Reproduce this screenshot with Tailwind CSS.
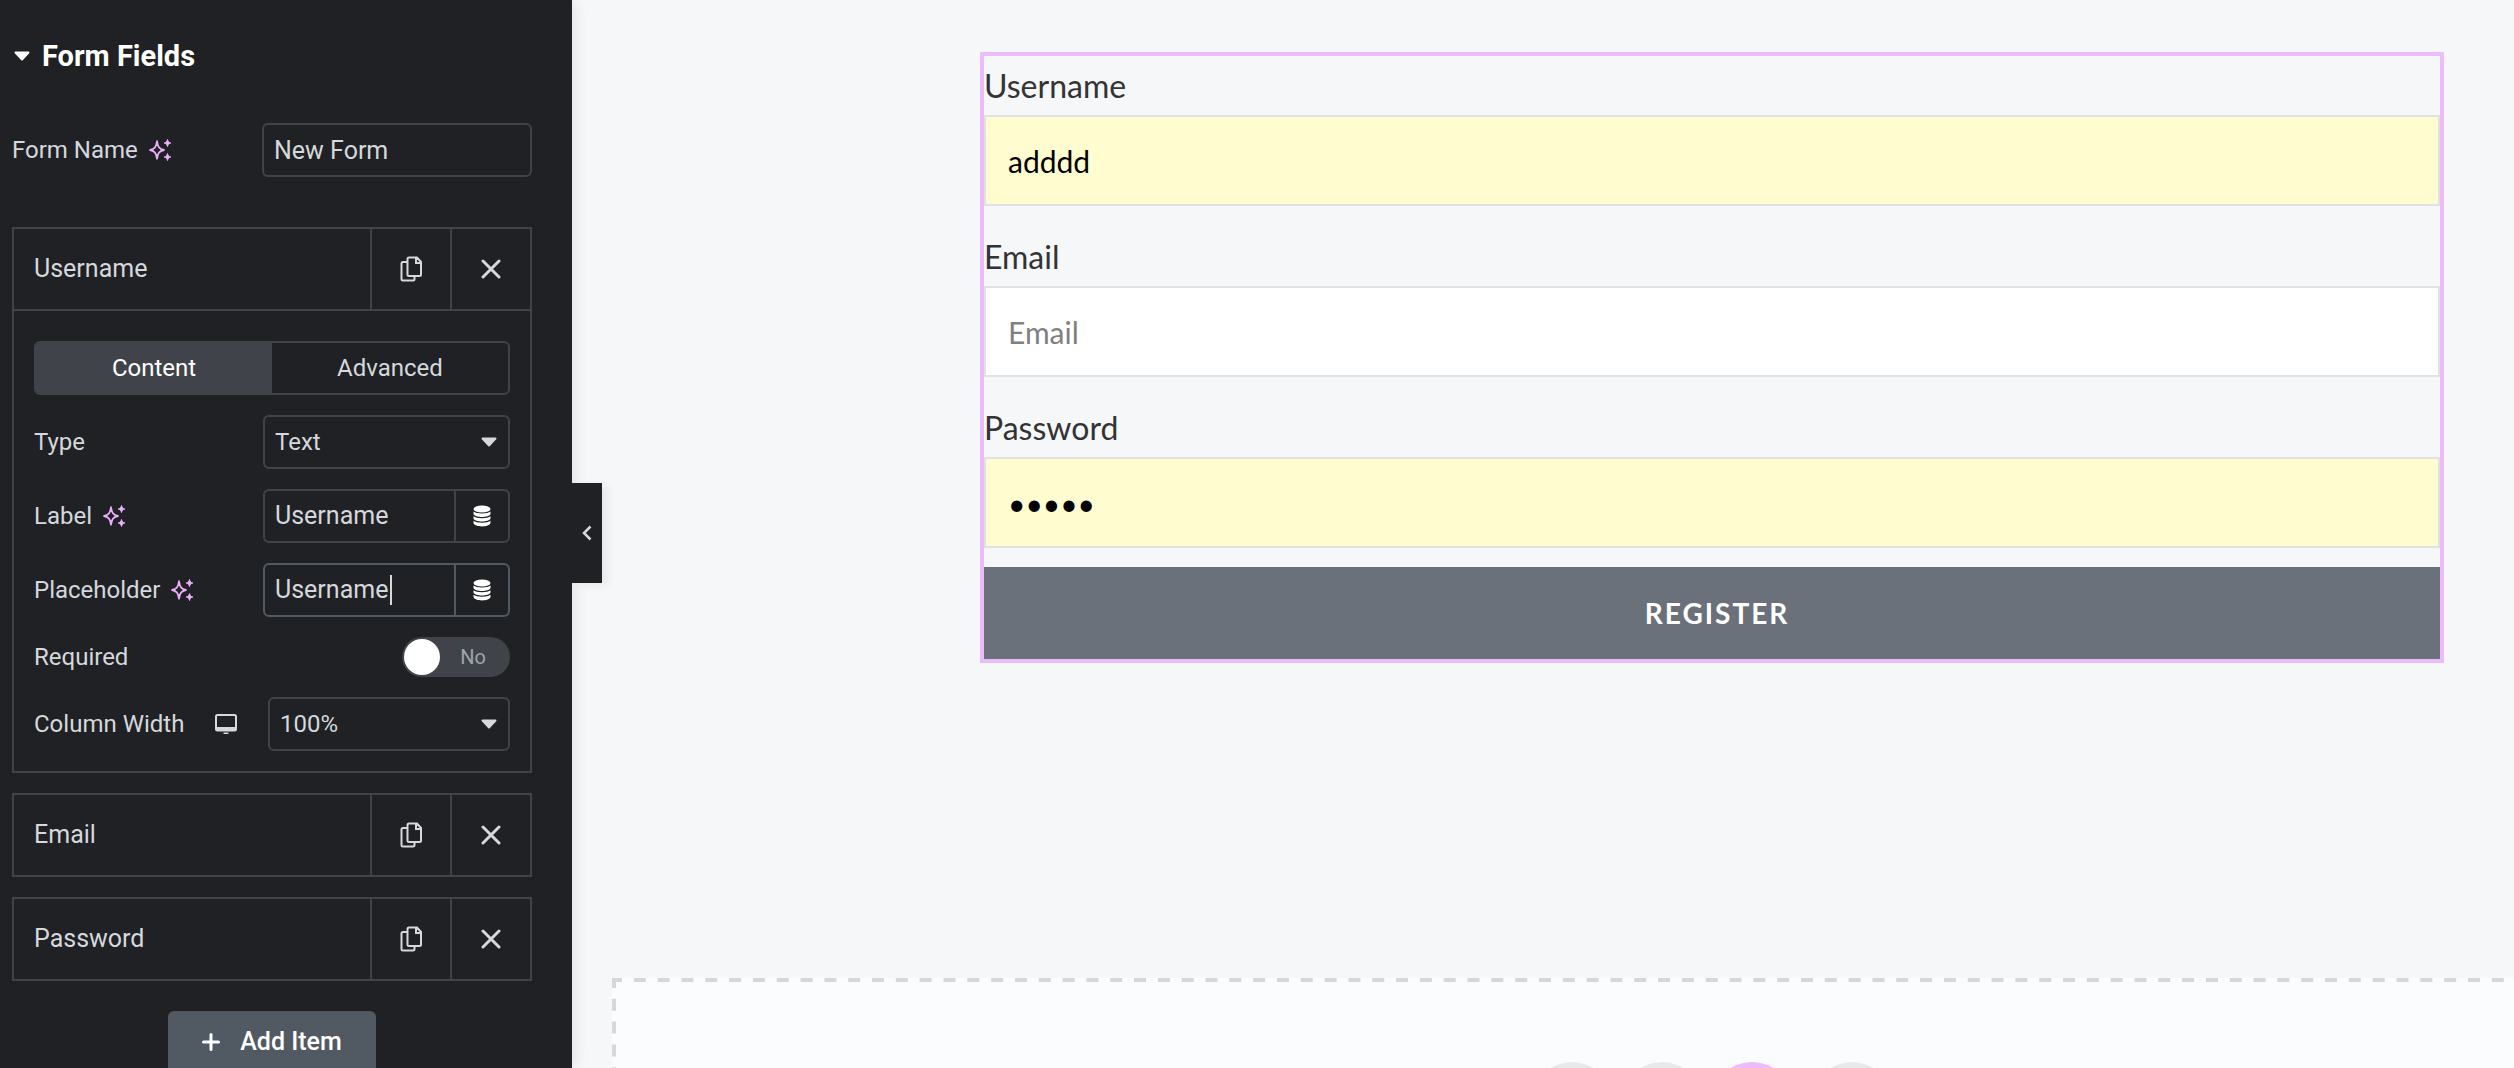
<!DOCTYPE html>
<html lang="en">
<head>
<meta charset="utf-8">
<meta name="viewport" content="width=device-width, initial-scale=1">
<title>Form Fields</title>
<script src="https://cdn.jsdelivr.net/npm/@tailwindcss/browser@4"></script>
</head>
<body class="bg-[#f5f7f9]">
<!-- Shared icons -->
<svg class="hidden" aria-hidden="true">
  <symbol id="sparkles" viewBox="0 0 24 24">
    <path d="M9 2.5C9.8 8.300 11.200 10.700 16.500 12 11.200 13.300 9.800 15.700 9 21.500 8.200 15.700 6.800 13.300 1.500 12 6.800 10.700 8.200 8.300 9 2.500Z" transform="translate(9 12) scale(.92) translate(-9 -12)" fill="none" stroke="currentColor" stroke-width="2" stroke-linejoin="round"/>
    <path d="M19.500 1.500c.5 2 1.300 3 3.300 3.500-2 .5-2.800 1.500-3.300 3.500-.5-2-1.300-3-3.300-3.500 2-.5 2.800-1.500 3.300-3.500ZM19.500 15.500c.5 2 1.300 3 3.300 3.500-2 .5-2.800 1.500-3.300 3.500-.5-2-1.300-3-3.300-3.500 2-.5 2.800-1.500 3.300-3.500Z" fill="currentColor" stroke="currentColor" stroke-width="1" stroke-linejoin="round"/>
  </symbol>
  <symbol id="copy" viewBox="0 0 22 26">
    <path d="M9 1.500h8l4 4.500v12.500a1.500 1.500 0 0 1-1.500 1.500H9A1.500 1.500 0 0 1 7.500 18.500V3A1.500 1.500 0 0 1 9 1.500Z M16 1.500V7h5 M7.500 6H3A1.500 1.500 0 0 0 1.500 7.500v15.500A1.500 1.500 0 0 0 3 24.500h10a1.500 1.500 0 0 0 1.500-1.500v-3" fill="none" stroke="currentColor" stroke-width="2"/>
  </symbol>
  <symbol id="close" viewBox="0 0 20 20">
    <path d="M2 2l16 16M18 2L2 18" fill="none" stroke="currentColor" stroke-width="3" stroke-linecap="round"/>
  </symbol>
  <symbol id="database" viewBox="0 0 18 22">
    <ellipse cx="9" cy="4" rx="8.500" ry="3.600"/>
    <path d="M.5 6.500C3 9 15 9 17.500 6.500V9c-1 4-16 4-17 0ZM.5 11.300c2.500 2.500 14.500 2.500 17 0v2.200c-1 4-16 4-17 0ZM.5 15.800c2.500 2.500 14.500 2.500 17 0V18c-1 4.500-16 4.500-17 0Z"/>
  </symbol>
  <symbol id="caret" viewBox="0 0 16 10">
    <path d="M1.500 1.500h13L8 8.500Z" fill="currentColor" stroke="currentColor" stroke-width="2" stroke-linejoin="round"/>
  </symbol>
</svg>

<div class="flex h-screen overflow-hidden">
  <aside class="relative z-10 w-[572px] shrink-0 bg-[#1f2124] pl-3 pr-10 text-[24px] leading-8 text-[#d5d8dc] shadow-[0_0_16px_rgba(0,0,0,0.12)]" style="font-family:Roboto,sans-serif">
    <h2 class="pt-9 text-[29px] font-bold leading-10 text-white">
      <button type="button" class="flex items-center gap-3"><svg class="ml-[2px] h-[10px] w-4"><use href="#caret"/></svg>Form Fields</button>
    </h2>

    <div class="mt-[47px] flex h-[54px] items-center justify-between">
      <label for="form-name" class="flex items-center gap-[10px]">Form Name <svg class="size-6 text-[#ecaefb]"><use href="#sparkles"/></svg></label>
      <input id="form-name" type="text" value="New Form" class="h-[54px] w-[270px] rounded-md border-2 border-[#40434a] bg-transparent px-[10px] text-[25px] outline-none">
    </div>

    <ul class="mt-[50px] flex flex-col gap-5">
      <li class="border-2 border-[#40434a]">
        <div class="flex h-20">
          <button type="button" class="flex-1 pl-5 text-left text-[25px]">Username</button>
          <button type="button" aria-label="Duplicate Username" class="grid w-20 place-items-center border-l-2 border-[#40434a]"><svg class="h-[26px] w-[22px]"><use href="#copy"/></svg></button>
          <button type="button" aria-label="Remove Username" class="grid w-20 place-items-center border-l-2 border-[#40434a]"><svg class="size-5"><use href="#close"/></svg></button>
        </div>
        <div class="flex flex-col gap-5 border-t-2 border-[#40434a] px-5 pb-5 pt-[30px]">
          <div role="tablist" class="grid h-[54px] grid-cols-2 overflow-hidden rounded-md border-2 border-[#40434a]">
            <button type="button" role="tab" aria-selected="true" class="bg-[#40434a] text-white">Content</button>
            <button type="button" role="tab" aria-selected="false">Advanced</button>
          </div>

          <div class="flex items-center justify-between">
            <label for="type">Type</label>
            <div class="relative">
              <select id="type" class="block h-[54px] w-[247px] appearance-none rounded-md border-2 border-[#40434a] bg-[#1f2124] px-[10px] outline-none"><option>Text</option></select>
              <svg class="pointer-events-none absolute right-[13px] top-[22px] h-[10px] w-4"><use href="#caret"/></svg>
            </div>
          </div>

          <div class="flex items-center justify-between">
            <label for="label" class="flex items-center gap-[10px]">Label <svg class="size-6 text-[#ecaefb]"><use href="#sparkles"/></svg></label>
            <div class="flex h-[54px] w-[247px] rounded-md border-2 border-[#40434a]">
              <input id="label" type="text" value="Username" class="min-w-0 flex-1 bg-transparent pl-[10px] text-[25px] outline-none">
              <button type="button" aria-label="Dynamic tags for Label" class="grid w-[54px] place-items-center border-l-2 border-[#40434a]"><svg class="h-[22px] w-[18px] fill-white"><use href="#database"/></svg></button>
            </div>
          </div>

          <div class="flex items-center justify-between">
            <label for="placeholder" class="flex items-center gap-[10px]">Placeholder <svg class="size-6 text-[#ecaefb]"><use href="#sparkles"/></svg></label>
            <div class="relative flex h-[54px] w-[247px] rounded-md border-2 border-[#515962]">
              <input id="placeholder" type="text" value="Username" class="min-w-0 flex-1 bg-transparent pl-[10px] text-[25px] outline-none">
              <span class="absolute left-[125px] top-[10px] h-[30px] w-[2px] bg-[#d5d8dc]"></span>
              <button type="button" aria-label="Dynamic tags for Placeholder" class="grid w-[54px] place-items-center border-l-2 border-[#515962]"><svg class="h-[22px] w-[18px] fill-white"><use href="#database"/></svg></button>
            </div>
          </div>

          <div class="flex items-center justify-between">
            <label for="required">Required</label>
            <label class="flex h-10 w-[108px] items-center rounded-full bg-[#40434a] p-[2px] text-[20px] text-[#9da5ae]">
              <input id="required" type="checkbox" class="sr-only">
              <span class="size-9 rounded-full bg-white"></span>
              <span class="flex-1 pr-[2px] text-center">No</span>
            </label>
          </div>

          <div class="flex items-center justify-between">
            <div class="flex items-center gap-[30px]">
              <label for="width">Column Width</label>
              <button type="button" aria-label="Desktop"><svg class="block h-[22px] w-6" viewBox="0 0 24 22"><rect x="2" y="2" width="20" height="15.500" rx="1.500" fill="none" stroke="currentColor" stroke-width="2"/><path d="M2 14h20v3.500H2ZM9.500 19.500h5v1.500h-5Z" fill="currentColor"/></svg></button>
            </div>
            <div class="relative">
              <select id="width" class="block h-[54px] w-[242px] appearance-none rounded-md border-2 border-[#40434a] bg-[#1f2124] px-[10px] outline-none"><option>100%</option></select>
              <svg class="pointer-events-none absolute right-[13px] top-[22px] h-[10px] w-4"><use href="#caret"/></svg>
            </div>
          </div>
        </div>
      </li>

      <li class="flex h-[84px] border-2 border-[#40434a]">
        <button type="button" class="flex-1 pl-5 text-left text-[25px]">Email</button>
        <button type="button" aria-label="Duplicate Email" class="grid w-20 place-items-center border-l-2 border-[#40434a]"><svg class="h-[26px] w-[22px]"><use href="#copy"/></svg></button>
        <button type="button" aria-label="Remove Email" class="grid w-20 place-items-center border-l-2 border-[#40434a]"><svg class="size-5"><use href="#close"/></svg></button>
      </li>
      <li class="flex h-[84px] border-2 border-[#40434a]">
        <button type="button" class="flex-1 pl-5 text-left text-[25px]">Password</button>
        <button type="button" aria-label="Duplicate Password" class="grid w-20 place-items-center border-l-2 border-[#40434a]"><svg class="h-[26px] w-[22px]"><use href="#copy"/></svg></button>
        <button type="button" aria-label="Remove Password" class="grid w-20 place-items-center border-l-2 border-[#40434a]"><svg class="size-5"><use href="#close"/></svg></button>
      </li>
    </ul>

    <button type="button" class="mx-auto mt-[30px] flex h-[62px] w-[208px] items-center justify-center gap-5 rounded-md bg-[#515962] text-[25px] font-medium text-white">
      <svg class="size-[18px]" viewBox="0 0 18 18"><path d="M9 1.500v15M1.500 9h15" fill="none" stroke="currentColor" stroke-width="3" stroke-linecap="round"/></svg>Add Item
    </button>

    <button type="button" aria-label="Hide panel" class="absolute left-full top-1/2 grid h-[100px] w-[30px] -translate-y-[51px] place-items-center bg-[#1f2124] shadow-[6px_2px_10px_rgba(0,0,0,0.06)]">
      <svg class="h-4 w-[10px]" viewBox="0 0 10 16"><path d="M8.500 1.500L2 8l6.500 6.500" fill="none" stroke="currentColor" stroke-width="2.500"/></svg>
    </button>
  </aside>

  <main class="flex min-w-0 flex-1 flex-col" style="font-family:Lato,sans-serif">
    <form class="ml-[408px] mr-[70px] mt-[52px] border-4 border-[#ebbbfa] text-[30px]">
      <label for="f-user" class="block pb-1 pt-1 text-[32px] leading-[51px] text-[#333333]">Username</label>
      <input id="f-user" type="text" value="adddd" class="block h-[91px] w-full border-2 border-[#e0e1e3] bg-[#fffccf] px-[22px] text-black outline-none">
      <label for="f-email" class="block pb-1 pt-[25px] text-[32px] leading-[51px] text-[#333333]">Email</label>
      <input id="f-email" type="email" placeholder="Email" class="block h-[91px] w-full border-2 border-[#e0e1e3] bg-white px-[22px] outline-none placeholder:text-[#808080]">
      <label for="f-pass" class="block pb-1 pt-[25px] text-[32px] leading-[51px] text-[#333333]">Password</label>
      <input id="f-pass" type="password" value="adddd" class="block h-[91px] w-full border-2 border-[#e0e1e3] bg-[#fffccf] px-[22px] text-black outline-none">
      <button type="submit" class="mt-[19px] block h-[92px] w-full bg-[#6a717b] pl-[10px] text-[28px] font-bold tracking-[2px] text-white">REGISTER</button>
    </form>

    <!-- Drop area for new sections -->
    <section class="relative ml-10 mt-[315px] h-40 shrink-0 bg-[#fbfcfe] pl-[298px] pt-[84px]">
      <svg class="absolute inset-0 size-full" fill="none" stroke="#d5d7da" stroke-width="4"><line x1="0" y1="2" x2="100%" y2="2" stroke-dasharray="12 11.820" stroke-dashoffset="2"/><line x1="2" y1="0" x2="2" y2="100%" stroke-dasharray="12 10.800" stroke-dashoffset="2"/></svg>
      <div class="relative flex justify-center gap-[10px]">
        <button type="button" aria-label="Add container" class="size-20 rounded-full bg-[#e8e9eb]"></button>
        <button type="button" aria-label="Add template" class="size-20 rounded-full bg-[#e8e9eb]"></button>
        <button type="button" aria-label="Build with AI" class="size-20 rounded-full bg-[#ebbbfa]"></button>
        <button type="button" aria-label="Library" class="ml-[10px] size-20 rounded-full bg-[#e8e9eb]"></button>
      </div>
    </section>
  </main>
</div>
</body>
</html>
